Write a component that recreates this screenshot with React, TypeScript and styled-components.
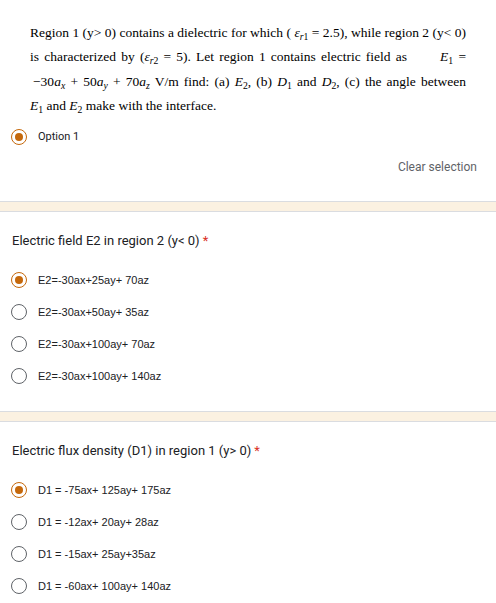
import styled, { createGlobalStyle } from "styled-components";

const GlobalStyle = createGlobalStyle`
  html, body {
    margin: 0;
    padding: 0;
    background: #ffffff;
  }
  body {
    font-family: Roboto, "Noto Sans", Arial, sans-serif;
    color: #202124;
  }
`;

const Page = styled.div`
  display: flex;
  flex-direction: column;
  width: 496px;
`;

const Card = styled.section<{ $top: number; $bottom: number }>`
  display: flex;
  flex-direction: column;
  padding: ${(p) => p.$top}px 0 ${(p) => p.$bottom}px 0;
`;

const Band = styled.div`
  height: 9px;
  background: #fbf1e1;
  border-top: 1px solid #dadce0;
  border-bottom: 1px solid #dadce0;
`;

const Prompt = styled.div`
  width: 436px;
  margin: 0 0 0 30px;
  font-family: "Liberation Serif", "Times New Roman", serif;
  font-size: 13.5px;
  line-height: 24.4px;
  color: #000;
`;

const Line = styled.div<{ $justify?: boolean; $indent?: number }>`
  text-align: ${(p) => (p.$justify ? "justify" : "left")};
  text-align-last: ${(p) => (p.$justify ? "justify" : "left")};
  padding-left: ${(p) => p.$indent ?? 0}px;
`;

const M = styled.i`
  font-style: italic;
`;

const Sub = styled.sub`
  font-size: 0.72em;
  line-height: 0;
  vertical-align: -0.28em;
`;

const Gap = styled.span`
  display: inline-block;
  width: 28px;
`;

const Question = styled.div`
  padding-left: 12px;
  font-size: 13px;
  line-height: 20px;
  color: #202124;
  margin-bottom: 13px;
`;

const Star = styled.span`
  color: #d93025;
  margin-left: 3px;
`;

const OptionList = styled.div<{ $offset?: number }>`
  display: flex;
  flex-direction: column;
  margin-top: ${(p) => p.$offset ?? 0}px;
`;

const OptionRow = styled.label<{ $sans?: boolean }>`
  display: flex;
  align-items: center;
  height: 32px;
  padding-left: 11px;
  gap: 11px;
  font-family: ${(p) =>
    p.$sans ? `"Liberation Sans", Arial, sans-serif` : `Roboto, Arial, sans-serif`};
  font-size: 11px;
  color: #202124;
`;

const Radio = styled.span<{ $checked?: boolean }>`
  box-sizing: border-box;
  width: 16px;
  height: 16px;
  border-radius: 50%;
  border: 1.5px solid ${(p) => (p.$checked ? "#c5680b" : "#5f6368")};
  display: flex;
  align-items: center;
  justify-content: center;
  flex: none;

  &::after {
    content: "";
    width: 8px;
    height: 8px;
    border-radius: 50%;
    background: #c5680b;
    display: ${(p) => (p.$checked ? "block" : "none")};
  }
`;

const ClearRow = styled.div`
  display: flex;
  justify-content: flex-end;
  padding-right: 19px;
  margin-top: 6px;
  font-size: 12px;
  line-height: 16px;
  color: #5f6368;
`;

type Choice = { label: string; checked?: boolean };

const q2: Choice[] = [
  { label: "E2=-30ax+25ay+ 70az", checked: true },
  { label: "E2=-30ax+50ay+ 35az" },
  { label: "E2=-30ax+100ay+ 70az" },
  { label: "E2=-30ax+100ay+ 140az" },
];

const q3: Choice[] = [
  { label: "D1 = -75ax+ 125ay+ 175az", checked: true },
  { label: "D1 = -12ax+ 20ay+ 28az" },
  { label: "D1 = -15ax+ 25ay+35az" },
  { label: "D1 = -60ax+ 100ay+ 140az" },
];

function Options({ items, offset, sans }: { items: Choice[]; offset?: number; sans?: boolean }) {
  return (
    <OptionList $offset={offset}>
      {items.map((c) => (
        <OptionRow key={c.label} $sans={sans}>
          <Radio $checked={c.checked} />
          {c.label}
        </OptionRow>
      ))}
    </OptionList>
  );
}

export default function App() {
  return (
    <Page>
      <GlobalStyle />
      <Card $top={21} $bottom={26}>
        <Prompt>
          <Line $justify>
            Region 1 (y&gt; 0) contains a dielectric for which ( <M>ε</M>
            <Sub>
              <M>r</M>1
            </Sub>{" "}
            = 2.5), while region 2 (y&lt; 0)
          </Line>
          <Line $justify>
            is characterized by (<M>ε</M>
            <Sub>
              <M>r</M>2
            </Sub>{" "}
            = 5). Let region 1 contains electric field as <Gap />
            <M>E</M>
            <Sub>1</Sub> =
          </Line>
          <Line $justify $indent={3}>
            −30<M>a</M>
            <Sub>
              <M>x</M>
            </Sub>{" "}
            + 50<M>a</M>
            <Sub>
              <M>y</M>
            </Sub>{" "}
            + 70<M>a</M>
            <Sub>
              <M>z</M>
            </Sub>{" "}
            V/m find: (a) <M>E</M>
            <Sub>2</Sub>, (b) <M>D</M>
            <Sub>1</Sub> and <M>D</M>
            <Sub>2</Sub>, (c) the angle between
          </Line>
          <Line>
            <M>E</M>
            <Sub>1</Sub> and <M>E</M>
            <Sub>2</Sub> make with the interface.
          </Line>
        </Prompt>
        <Options items={[{ label: "Option 1", checked: true }]} offset={2} />
        <ClearRow>Clear selection</ClearRow>
      </Card>
      <Band />
      <Card $top={19} $bottom={19}>
        <Question>
          Electric field E2 in region 2 (y&lt; 0)<Star>*</Star>
        </Question>
        <Options items={q2} sans />
      </Card>
      <Band />
      <Card $top={19} $bottom={16}>
        <Question>
          Electric flux density (D1) in region 1 (y&gt; 0)<Star>*</Star>
        </Question>
        <Options items={q3} sans />
      </Card>
    </Page>
  );
}
